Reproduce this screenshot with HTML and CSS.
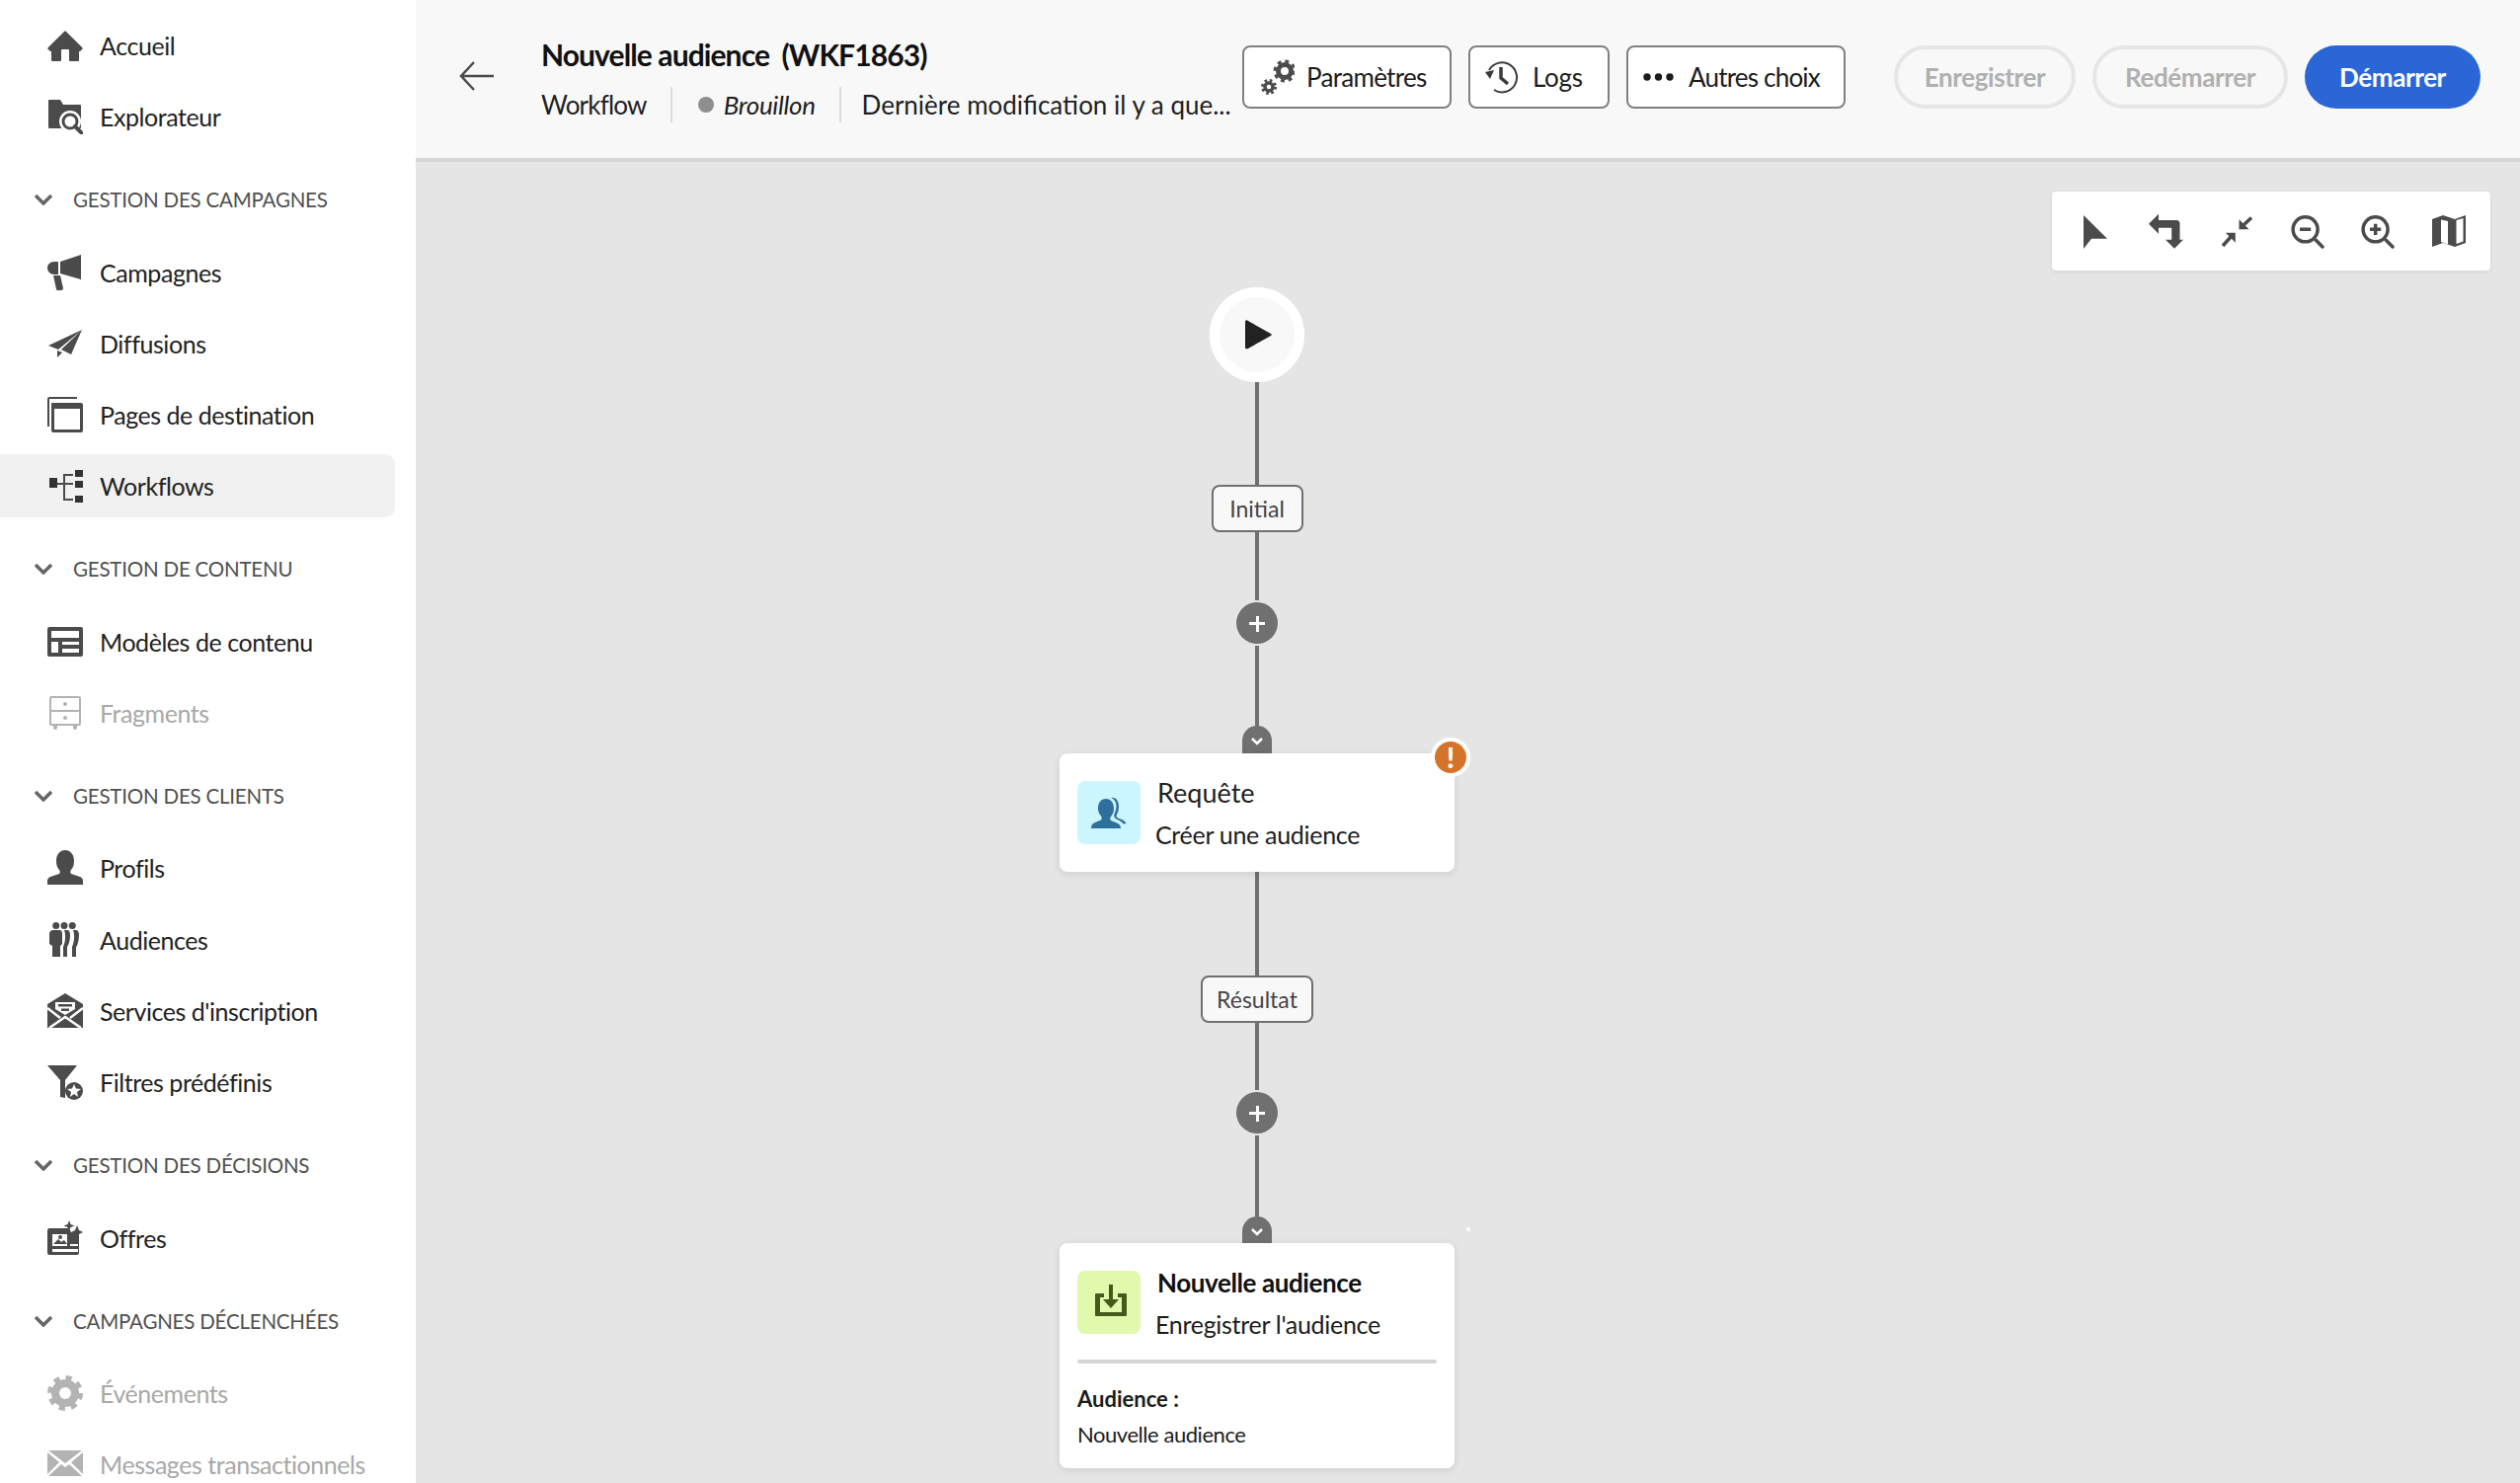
FILE: index.html
```html
<!DOCTYPE html>
<html lang="fr">
<head>
<meta charset="UTF-8">
<title>Nouvelle audience (WKF1863)</title>
<link rel="stylesheet" href="styles.css">
</head>
<body>

<!-- Barre latérale -->
<nav class="sidebar">
  <a class="nav-item">
    <svg class="nav-icon" viewBox="0 0 18 18"><path d="M17.67 10.13 9.38 1.83a.53.53 0 0 0-.75 0L.33 10.13a.53.53 0 0 0 0 .75l.98.97a.5.5 0 0 0 .35.15H2v4.5a.5.5 0 0 0 .5.5h4a.5.5 0 0 0 .5-.5v-5a.5.5 0 0 1 .5-.5h3a.5.5 0 0 1 .5.5v5a.5.5 0 0 0 .5.5h4a.5.5 0 0 0 .5-.5V12h.33a.5.5 0 0 0 .35-.15l.98-.97a.53.53 0 0 0 0-.75Z"/></svg>
    Accueil
  </a>
  <a class="nav-item">
    <svg class="nav-icon" viewBox="0 0 36 36"><path d="M2 1h11l3 5h17a1 1 0 0 1 1 1v22a1 1 0 0 1-1 1H2a1 1 0 0 1-1-1V2a1 1 0 0 1 1-1Z"/><circle cx="23" cy="23" r="11" fill="#fff"/><circle cx="23" cy="23" r="7" fill="none" stroke="#4b4b4b" stroke-width="3"/><path d="m28 28 7 7" stroke="#4b4b4b" stroke-width="4" stroke-linecap="round"/></svg>
    Explorateur
  </a>

  <div class="nav-section">
    <svg class="chevron" viewBox="0 0 20 12"><path d="m2 2 8 8 8-8"/></svg>
    Gestion des campagnes
  </div>
  <a class="nav-item">
    <svg class="nav-icon" viewBox="0 0 36 36"><path d="M13 7 34 0v25l-21-6ZM11 7v13H7C3 20 0 17 0 13c0-3 3-6 7-6Z"/><path d="M6 21h7l3 13c0 1-1 2-2 2h-4c-1 0-1-1-1-1Z"/></svg>
    Campagnes
  </a>
  <a class="nav-item">
    <svg class="nav-icon" viewBox="0 0 36 36"><path d="M1 20 35 4 11 24ZM35 4 24 29l-10-5ZM10 25l5 2-5 5Z"/></svg>
    Diffusions
  </a>
  <a class="nav-item">
    <svg class="nav-icon" viewBox="0 0 36 36"><path d="M2 0h28v2H2v28H0V2a2 2 0 0 1 2-2Z"/><path d="M4 6h30a2 2 0 0 1 2 2v26a2 2 0 0 1-2 2H6a2 2 0 0 1-2-2Zm3 6v21h26V12Z"/></svg>
    Pages de destination
  </a>
  <a class="nav-item is-active">
    <svg class="nav-icon" viewBox="0 0 36 36"><path d="M2 10h8v10H2ZM28 2h8v7h-8ZM28 13h8v7h-8ZM28 28h8v7h-8Z" fill="#333"/><path d="M10 16h6M26 7h-9v25h9M17 16h9" fill="none" stroke="#4b4b4b" stroke-width="2"/></svg>
    Workflows
  </a>

  <div class="nav-section">
    <svg class="chevron" viewBox="0 0 20 12"><path d="m2 2 8 8 8-8"/></svg>
    Gestion de contenu
  </div>
  <a class="nav-item">
    <svg class="nav-icon" viewBox="0 0 36 36"><path fill-rule="evenodd" d="M2 3h32a2 2 0 0 1 2 2v26a2 2 0 0 1-2 2H2a2 2 0 0 1-2-2V5a2 2 0 0 1 2-2Zm2 4v7h28V7Zm0 11v11h7V18Zm11 0v3h17v-3Zm0 7v4h17v-4Z"/></svg>
    Modèles de contenu
  </a>
  <a class="nav-item is-disabled">
    <svg class="nav-icon" viewBox="0 0 36 36"><path fill-rule="evenodd" d="M4 1h28a2 2 0 0 1 2 2v26a2 2 0 0 1-2 2h-2v2a2 2 0 0 1-4 0v-2H10v2a2 2 0 0 1-4 0v-2H4a2 2 0 0 1-2-2V3a2 2 0 0 1 2-2Zm0 2v12h28V3Zm0 14v12h28V17Z"/><circle cx="18" cy="9" r="2"/><circle cx="18" cy="23" r="2"/></svg>
    Fragments
  </a>

  <div class="nav-section">
    <svg class="chevron" viewBox="0 0 20 12"><path d="m2 2 8 8 8-8"/></svg>
    Gestion des clients
  </div>
  <a class="nav-item">
    <svg class="nav-icon" viewBox="0 0 36 36"><path d="M0 35v-4c0-2 1-3 3-4l9-3c1-1 1-3 0-4-2-2-3-5-3-9C9 4 13 0 18 0s9 4 9 11c0 4-1 7-3 9-1 1-1 3 0 4l9 3c2 1 3 2 3 4v4Z"/></svg>
    Profils
  </a>
  <a class="nav-item">
    <svg class="nav-icon" viewBox="0 0 36 36"><circle cx="8.700" cy="3.500" r="3.500"/><circle cx="17" cy="3.500" r="3.500"/><circle cx="25.300" cy="3.500" r="3.500"/><path d="M2 12c0-3 2-4 4-4h6c2 0 3 1 3 4v10l-2 2v11H5V24l-3-2Z"/><path d="M17 8h3c2 0 3 2 3 5 0 5-1 9-3 12v10h-4V25c2-4 3-12 1-17Z"/><path d="M26 8h3c2 0 3 2 3 5 0 4-1 8-2 11l-1 1v10h-4V25c2-4 3-12 1-17Z"/></svg>
    Audiences
  </a>
  <a class="nav-item">
    <svg class="nav-icon" viewBox="0 0 36 36"><path d="M18 0 36 11v24H0V11Z"/><path d="M8 9h20v7l-10 6-10-6Z" fill="#fff"/><path d="M11 11h14v2.500H11ZM14 15.500h8V18h-8Z"/><path d="M0 15l13 10M36 15 23 25M2 35l16-11 16 11" fill="none" stroke="#fff" stroke-width="2.500"/></svg>
    Services d'inscription
  </a>
  <a class="nav-item">
    <svg class="nav-icon" viewBox="0 0 36 36"><path d="M0 1h30L18 16v18l-5-1V16Z"/><circle cx="27" cy="27" r="9"/><path d="m27 20 2 4.500 5 .5-4 3 1 5-4-3-4 3 1-5-4-3 5-.5Z" fill="#fff"/></svg>
    Filtres prédéfinis
  </a>

  <div class="nav-section">
    <svg class="chevron" viewBox="0 0 20 12"><path d="m2 2 8 8 8-8"/></svg>
    Gestion des décisions
  </div>
  <a class="nav-item">
    <svg class="nav-icon" viewBox="0 0 36 36"><path fill-rule="evenodd" d="M2 8h20l2 4 4 1 4-1v21a2 2 0 0 1-2 2H2a2 2 0 0 1-2-2V10a2 2 0 0 1 2-2Zm3 6v12h15V14Zm0 15v3h26v-3Zm18-5v2h8v-2Z"/><path d="m6 24 5-5 3 3 3-2 3 4Z"/><circle cx="13" cy="17" r="2"/><path d="m22 0 1.500 4 4 1.500-4 1.500L22 11l-1.500-4-4-1.500 4-1.500ZM30 5l2 5 4 2-4 2-2 5-2-5-4-2 4-2Z"/></svg>
    Offres
  </a>

  <div class="nav-section">
    <svg class="chevron" viewBox="0 0 20 12"><path d="m2 2 8 8 8-8"/></svg>
    Campagnes déclenchées
  </div>
  <a class="nav-item is-disabled">
    <svg class="nav-icon" viewBox="0 0 36 36"><circle cx="18" cy="18" r="14" fill="none" stroke="#b3b3b3" stroke-width="8" stroke-dasharray="5.500 5.500"/><circle cx="18" cy="18" r="10" fill="none" stroke="#b3b3b3" stroke-width="8"/></svg>
    Événements
  </a>
  <a class="nav-item is-disabled">
    <svg class="nav-icon" viewBox="0 0 36 36"><path d="M1 4h34L18 17ZM0 6l12 10L0 28ZM36 6 24 16l12 12ZM14 18l4 3 4-3 13 12H1Z"/></svg>
    Messages transactionnels
  </a>
</nav>

<div class="main">
  <!-- En-tête du workflow -->
  <header class="top-bar">
    <svg class="back-arrow" viewBox="0 0 36 30"><path d="M35 15H2M15 1 2 15l13 14"/></svg>
    <div class="wf-info">
      <div class="wf-title">Nouvelle audience <span class="wf-id">(WKF1863)</span></div>
      <div class="wf-meta">
        <span class="wf-type">Workflow</span>
        <span class="wf-status"><i class="status-dot"></i><em>Brouillon</em></span>
        <span>Dernière modification il y a que...</span>
      </div>
    </div>
    <div class="wf-actions">
      <button class="btn btn-params">
        <svg class="btn-icon" viewBox="0 0 36 36"><circle cx="26" cy="12" r="10" fill="none" stroke="#4b4b4b" stroke-width="3" stroke-dasharray="3.930 3.930"/><circle cx="26" cy="12" r="6.500" fill="none" stroke="#4b4b4b" stroke-width="5"/><circle cx="10" cy="28" r="6.500" fill="none" stroke="#4b4b4b" stroke-width="3" stroke-dasharray="2.550 2.550"/><circle cx="10" cy="28" r="4" fill="none" stroke="#4b4b4b" stroke-width="3.500"/></svg>
        Paramètres
      </button>
      <button class="btn btn-logs">
        <svg class="btn-icon" viewBox="0 0 36 36"><path d="M4 11A15 15 0 1 1 9 31" fill="none" stroke="#3b3b3b" stroke-width="2"/><path d="M16 8v11l7 6" fill="none" stroke="#3b3b3b" stroke-width="3.500"/><path d="M0 13 9 11 5 20Z" fill="#3b3b3b"/></svg>
        Logs
      </button>
      <button class="btn btn-more">
        <svg class="btn-dots" viewBox="0 0 32 8"><circle cx="4" cy="4" r="3.700"/><circle cx="15.500" cy="4" r="3.700"/><circle cx="27" cy="4" r="3.700"/></svg>
        Autres choix
      </button>
      <button class="pill pill-save">Enregistrer</button>
      <button class="pill pill-restart">Redémarrer</button>
      <button class="pill pill-start">Démarrer</button>
    </div>
  </header>

  <!-- Zone de travail -->
  <section class="canvas">
    <div class="toolbar">
      <svg viewBox="0 0 36 36"><path d="M6 2 30 25.700H14L6 36Z"/></svg>
      <svg viewBox="0 0 36 36"><path d="M0 10.700 10 .7V7h18a3.500 3.500 0 0 1 3.500 3.500v16.200H35l-9 9-9-9h6.200v-12H10v6Z"/></svg>
      <svg viewBox="0 0 36 36"><path d="M20.500 16.300v-10l10 10ZM16.800 19.700h-10l10 10Z"/><path d="m25 12 8-7.500M12 24l-8 9" fill="none" stroke="#4b4b4b" stroke-width="3.500"/></svg>
      <svg viewBox="0 0 36 36"><circle cx="15.600" cy="16.300" r="12.500" fill="none" stroke="#4b4b4b" stroke-width="3.500"/><path d="m26.300 27.300 6.700 6.700" stroke="#4b4b4b" stroke-width="3.500" stroke-linecap="round"/><path d="M10 14.500h11.200V18H10Z"/></svg>
      <svg viewBox="0 0 36 36"><circle cx="15.600" cy="16.300" r="12.500" fill="none" stroke="#4b4b4b" stroke-width="3.500"/><path d="m26.300 27.300 6.700 6.700" stroke="#4b4b4b" stroke-width="3.500" stroke-linecap="round"/><path d="M13.900 10.700h3.500v3.800h3.800V18h-3.800v3.900h-3.500V18H10v-3.500h3.900Z"/></svg>
      <svg viewBox="0 0 36 36"><path d="M1 6 12 2 24 6 35 2V30L24 34 12 30 1 34Z"/><path d="M10 6.500 17 8V31.500L10 29ZM25.500 7 32.500 5V28.500L25.500 31Z" fill="#fff"/></svg>
    </div>

    <div class="flow">
      <div class="start-node">
        <svg class="play" viewBox="0 0 28 30"><path d="M1 2c0-2 2-2 3-1l23 13c1 .5 1 1.500 0 2L4 29c-1 .5-3 .5-3-1Z"/></svg>
      </div>
      <div class="link link-a"></div>
      <div class="edge-label edge-initial">Initial</div>
      <div class="link link-b"></div>
      <div class="add-btn"></div>
      <div class="link link-c"></div>
      <div class="handle">
        <svg viewBox="0 0 14 10"><path d="m2 2 5 5 5-5"/></svg>
      </div>
      <article class="card card-query">
        <div class="card-head">
          <div class="card-icon icon-query">
            <svg viewBox="0 0 36 36"><path d="M0 34c0-3 1-5 4-6l6-2.500c1-1 1-3 0-4-2-2-3-5-3-8C7 8 10 4 15 4s8 4 8 10c0 3-1 6-3 8-1 1-1 3 0 4l6 2.500c3 1 4 3 4 5.500Z"/><path d="M20 3c5-1 8 3 8 9 0 3-1 6-2 8-1 2 0 3 1 3.500l4 1.500c2 1 4 2 4.500 4l-3 .5c-1-2-3-3-5-4-3-1-5-3-4-6 1-3 2-5 2-8 0-4-2-7-5-8.500Z"/></svg>
          </div>
          <div class="card-text">
            <div class="card-title">Requête</div>
            <div class="card-sub">Créer une audience</div>
          </div>
        </div>
        <div class="warn-badge"><span>!</span></div>
      </article>
      <div class="link link-d"></div>
      <div class="edge-label edge-result">Résultat</div>
      <div class="link link-e"></div>
      <div class="add-btn"></div>
      <div class="link link-f"></div>
      <div class="handle handle-b">
        <svg viewBox="0 0 14 10"><path d="m2 2 5 5 5-5"/></svg>
      </div>
      <article class="card">
        <div class="card-head">
          <div class="card-icon icon-save">
            <svg viewBox="0 0 36 36"><path d="M5 9h8v4H9v15h22V13h-4V9h8a1 1 0 0 1 1 1v21a1 1 0 0 1-1 1H5a1 1 0 0 1-1-1V10a1 1 0 0 1 1-1Z"/><path d="M18 0h4v15h6l-8 9-8-9h6Z"/></svg>
          </div>
          <div class="card-text">
            <div class="card-title title-strong">Nouvelle audience</div>
            <div class="card-sub">Enregistrer l'audience</div>
          </div>
        </div>
        <div class="card-divider"></div>
        <div class="card-body">
          <div class="body-label">Audience :</div>
          <div class="body-value">Nouvelle audience</div>
        </div>
      </article>
    </div>
    <div class="stray-dot"></div>
  </section>
</div>

</body>
</html>
```

FILE: styles.css
```css
body {
  font-family: Lato, "Open Sans", sans-serif;
  background-color: #e5e5e5;
  color: #222222;
  margin: 0;
  padding: 0;
  height: 1502px;
  display: flex;
  overflow: hidden;
}

/* Barre latérale */
.sidebar {
  width: 421px;
  flex-shrink: 0;
  background-color: #ffffff;
  padding-top: 14px;
  box-sizing: border-box;
}
.nav-item {
  display: flex;
  align-items: center;
  gap: 17px;
  width: 400px;
  height: 64px;
  margin-bottom: 8.2px;
  padding-left: 48px;
  box-sizing: border-box;
  border-radius: 0 10px 10px 0;
  font-size: 25px;
  letter-spacing: -0.45px;
  color: #222222;
}
.nav-item.is-active {
  background-color: #f1f1f1;
}
.nav-item.is-disabled {
  color: #a8a8a8;
}
.nav-icon {
  width: 36px;
  height: 36px;
  flex-shrink: 0;
  fill: #4b4b4b;
}
.is-disabled .nav-icon {
  fill: #b3b3b3;
}
.nav-section {
  display: flex;
  align-items: center;
  gap: 20px;
  height: 40px;
  margin: 32px 0 21.5px;
  padding-left: 34px;
  font-size: 20.5px;
  letter-spacing: -0.2px;
  text-transform: uppercase;
  color: #505050;
}
.chevron {
  width: 20px;
  height: 12px;
  fill: none;
  stroke: #666666;
  stroke-width: 3.5;
}

/* En-tête */
.main {
  flex: 1;
  display: flex;
  flex-direction: column;
  min-width: 0;
}
.top-bar {
  height: 164px;
  flex-shrink: 0;
  display: flex;
  box-sizing: border-box;
  padding: 0 40px 0 44px;
  background-color: #f8f8f8;
  border-bottom: 4px solid #d5d5d5;
}
.back-arrow {
  width: 36px;
  height: 30px;
  margin: 62px 47px 0 0;
  flex-shrink: 0;
  fill: none;
  stroke: #4b4b4b;
  stroke-width: 2.500;
}
.wf-info {
  padding-top: 35px;
  width: 700px;
  flex-shrink: 0;
}
.wf-title {
  font-size: 30px;
  font-weight: 700;
  line-height: 40px;
  letter-spacing: -0.9px;
  color: #111111;
  white-space: nowrap;
}
.wf-id {
  margin-left: 6px;
}
.wf-meta {
  display: flex;
  align-items: center;
  margin-top: 13px;
  height: 36px;
  font-size: 26px;
  color: #1f1f1f;
  white-space: nowrap;
}
.wf-type {
  letter-spacing: -0.8px;
}
.wf-status {
  display: flex;
  align-items: center;
  gap: 10px;
  margin: 0 21px 0 24px;
  padding: 0 24px 0 26px;
  height: 36px;
  border-left: 2px solid #dcdcdc;
  border-right: 2px solid #dcdcdc;
  letter-spacing: -0.35px;
}
.status-dot {
  width: 16px;
  height: 16px;
  border-radius: 50%;
  background-color: #8e8e8e;
}
.wf-actions {
  display: flex;
  gap: 17px;
  margin: 46px 0 0 auto;
  height: 64px;
}
.btn {
  display: flex;
  align-items: center;
  height: 64px;
  box-sizing: border-box;
  padding: 0 0 0 15px;
  background-color: #ffffff;
  border: 2px solid #808080;
  border-radius: 8px;
  font-family: inherit;
  font-size: 26px;
  color: #1c1c1c;
}
.btn-params {
  width: 212px;
  gap: 12px;
  letter-spacing: -0.7px;
}
.btn-logs {
  width: 143px;
  gap: 12px;
  letter-spacing: -0.3px;
}
.btn-more {
  width: 222px;
  gap: 14px;
  letter-spacing: -0.8px;
}
.btn-icon {
  width: 36px;
  height: 36px;
}
.btn-dots {
  width: 32px;
  height: 8px;
  fill: #1c1c1c;
}
.pill {
  height: 64px;
  box-sizing: border-box;
  border-radius: 32px;
  font-family: inherit;
  font-size: 26px;
  font-weight: 700;
  letter-spacing: -0.4px;
  padding: 0;
}
.pill-save {
  width: 184px;
  margin-left: 32px;
  background-color: transparent;
  border: 4px solid #e6e6e6;
  color: #b0b0b0;
}
.pill-restart {
  width: 198px;
  background-color: transparent;
  border: 4px solid #e6e6e6;
  color: #b0b0b0;
}
.pill-start {
  width: 178px;
  background-color: #2a66d6;
  border: none;
  color: #ffffff;
}

/* Zone de travail */
.canvas {
  flex: 1;
  position: relative;
  background-color: #e5e5e5;
}
.toolbar {
  position: absolute;
  top: 30px;
  right: 30px;
  width: 444px;
  height: 80px;
  box-sizing: border-box;
  padding: 0 24px 0 26px;
  display: flex;
  align-items: center;
  justify-content: space-between;
  background-color: #ffffff;
  border-radius: 4px;
  box-shadow: 0 1px 4px rgba(0, 0, 0, 0.08);
}
.toolbar svg {
  width: 36px;
  height: 36px;
  fill: #4b4b4b;
}
.flow {
  width: 400px;
  margin-left: 652px;
  padding-top: 127px;
  display: flex;
  flex-direction: column;
  align-items: center;
}
.start-node {
  width: 96px;
  height: 96px;
  box-sizing: border-box;
  display: flex;
  align-items: center;
  justify-content: center;
  background-color: #f8f8f8;
  border: 10px solid #ffffff;
  border-radius: 50%;
}
.play {
  width: 28px;
  height: 30px;
  margin-left: 1px;
  fill: #222222;
}
.link {
  width: 4px;
  background-color: #707070;
}
.link-a { height: 104px; }
.link-b { height: 69px; margin-bottom: 2px; }
.link-c { height: 81px; margin-top: 2px; }
.link-d { height: 105px; }
.link-e { height: 68px; margin-bottom: 2px; }
.link-f { height: 82px; margin-top: 2px; }
.edge-label {
  height: 48px;
  box-sizing: border-box;
  display: flex;
  align-items: center;
  justify-content: center;
  background-color: #f8f8f8;
  border: 2px solid #707070;
  border-radius: 8px;
  font-size: 23px;
  color: #444444;
}
.edge-initial { width: 93px; }
.edge-result { width: 114px; }
.add-btn {
  width: 42px;
  height: 42px;
  position: relative;
  border-radius: 50%;
  background-color: #707070;
}
/* le + du bouton d'ajout */
.add-btn::before,
.add-btn::after {
  content: "";
  position: absolute;
  background-color: #ffffff;
  left: 13px;
  top: 20px;
  width: 16px;
  height: 3px;
}
.add-btn::after {
  left: 19.500px;
  top: 13.500px;
  width: 3px;
  height: 16px;
}
.handle {
  width: 30px;
  height: 28px;
  display: flex;
  justify-content: center;
  padding-top: 11px;
  box-sizing: border-box;
  background-color: #707070;
  border-radius: 15px 15px 0 0;
}
.handle-b {
  height: 27px;
}
.handle svg {
  width: 14px;
  height: 10px;
  fill: none;
  stroke: #ffffff;
  stroke-width: 2.500;
}
.card {
  width: 400px;
  position: relative;
  box-sizing: border-box;
  padding: 19px 18px 16px;
  background-color: #ffffff;
  border-radius: 8px;
  box-shadow: 0 2px 8px rgba(0, 0, 0, 0.1);
}
.card-query {
  padding-bottom: 17px;
}
.card-head {
  display: flex;
  gap: 17px;
}
.card-icon {
  width: 64px;
  height: 64px;
  margin-top: 9px;
  flex-shrink: 0;
  display: flex;
  align-items: center;
  justify-content: center;
  border-radius: 8px;
}
.card-icon svg {
  width: 36px;
  height: 36px;
}
.icon-query {
  background-color: #ccf6ff;
  fill: #2e6f9e;
}
.icon-save {
  background-color: #e0f9ac;
  fill: #45591a;
}
.card-text {
  line-height: 42px;
  white-space: nowrap;
}
.card-title {
  font-size: 27px;
  color: #222222;
}
.title-strong {
  font-weight: 700;
  font-size: 26px;
  letter-spacing: -0.4px;
  color: #111111;
}
.card-sub {
  margin-left: -2px;
  font-size: 25px;
  letter-spacing: -0.3px;
  color: #1c1c1c;
}
.warn-badge {
  position: absolute;
  top: -16px;
  right: -16px;
  width: 32px;
  height: 32px;
  display: flex;
  align-items: center;
  justify-content: center;
  background-color: #d6732a;
  border: 4px solid #ffffff;
  border-radius: 50%;
  color: #ffffff;
  font-size: 28px;
  font-weight: 900;
  line-height: 1;
}
.card-divider {
  height: 4px;
  margin-top: 15px;
  border-radius: 2px;
  background-color: #d5d5d5;
}
.card-body {
  padding-top: 18px;
  font-size: 22px;
  line-height: 36px;
  color: #1c1c1c;
}
.body-label {
  font-weight: 700;
}
.body-value {
  letter-spacing: -0.45px;
}
.stray-dot {
  position: absolute;
  left: 1064px;
  top: 1079px;
  width: 4px;
  height: 4px;
  border-radius: 50%;
  background-color: #ffffff;
}
```
